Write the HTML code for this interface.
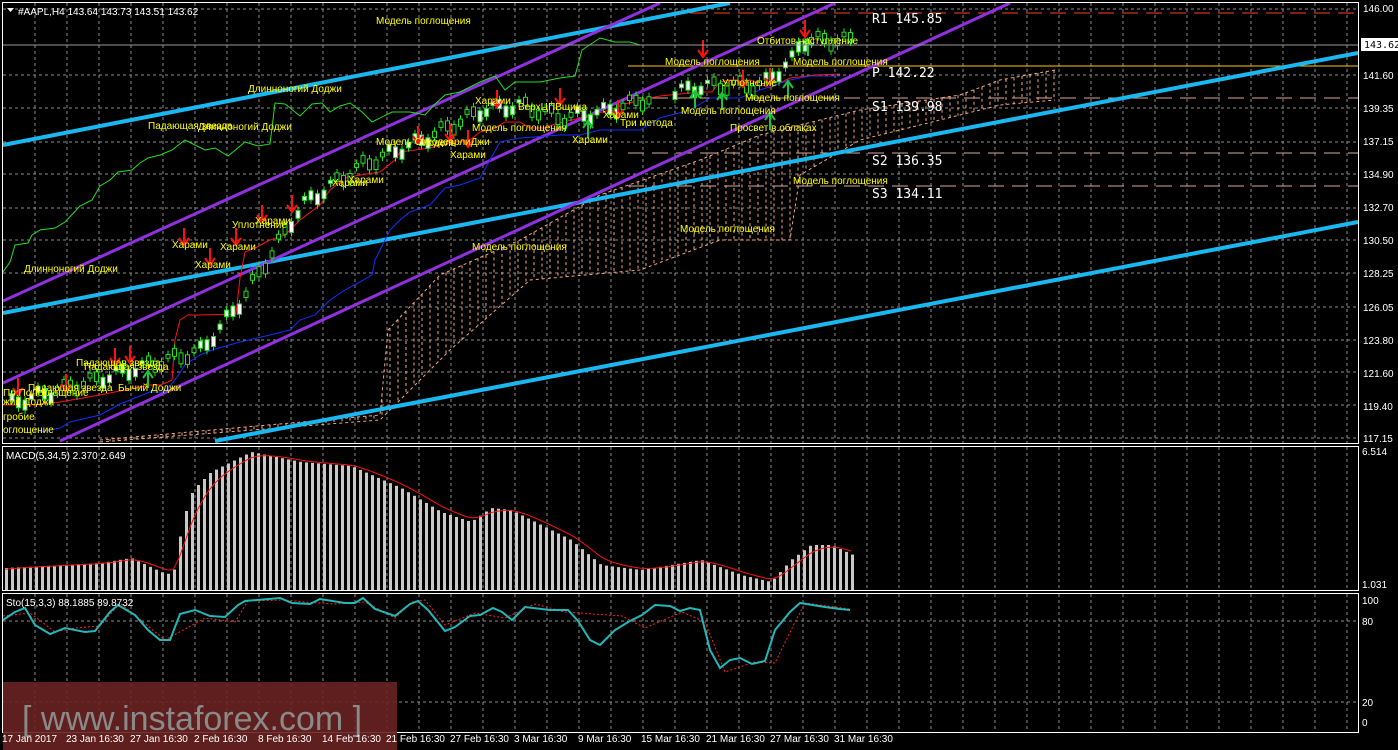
<!DOCTYPE html>
<html><head><meta charset="utf-8"><style>
html,body{margin:0;padding:0;background:#000;width:1398px;height:750px;overflow:hidden}
svg{display:block}
text{font-family:"Liberation Sans","DejaVu Sans",sans-serif}
.y{fill:#ffff00;font-size:10px}
.ax{fill:#fff;font-size:10px;font-family:"DejaVu Sans Mono","Liberation Mono",monospace}
.pv{fill:#fff;font-size:13px;font-family:"DejaVu Sans Mono","Liberation Mono",monospace}
</style></head><body>
<svg id="s" width="1398" height="750" viewBox="0 0 1398 750" xmlns="http://www.w3.org/2000/svg">
<rect width="1398" height="750" fill="#000"/>
<g id="grid" stroke="#8a8a8a" stroke-width="1" stroke-dasharray="3,3"></g>
<defs><clipPath id="cm"><rect x="3" y="3" width="1355" height="440"/></clipPath></defs>
<g clip-path="url(#cm)">
<g id="cloud" stroke="#f0a878" stroke-width="1" stroke-dasharray="3,3" fill="none"></g>
<line x1="690" y1="13" x2="1358" y2="13" stroke="#ff4020" stroke-dasharray="16,8"/>
<line x1="628" y1="66" x2="1358" y2="66" stroke="#ffc800"/>
<line x1="628" y1="98" x2="1358" y2="98" stroke="#d8a898" stroke-dasharray="16,8"/>
<line x1="628" y1="153" x2="1358" y2="153" stroke="#d8a898" stroke-dasharray="16,8"/>
<line x1="628" y1="186" x2="1358" y2="186" stroke="#d8a898" stroke-dasharray="16,8"/>
<line x1="3" y1="145" x2="730" y2="3" stroke="#1ab8f0" stroke-width="4"/>
<line x1="3" y1="313" x2="1358" y2="53" stroke="#1ab8f0" stroke-width="4"/>
<line x1="215" y1="441" x2="1358" y2="222" stroke="#1ab8f0" stroke-width="4"/>
<line x1="3" y1="301" x2="660" y2="3" stroke="#9030e0" stroke-width="3"/>
<line x1="3" y1="383" x2="835" y2="3" stroke="#9030e0" stroke-width="3"/>
<line x1="60" y1="441" x2="1010" y2="3" stroke="#9030e0" stroke-width="3"/>
<polyline fill="none" stroke="#20e020" stroke-width="1" points="3,272 10,262 15,245 28,243 32,235 40,230 55,228 65,222 80,206 92,200 100,186 110,180 118,172 132,170 140,163 148,158 160,155 172,150 185,140 205,150 215,148 228,156 245,142 258,146 270,144 275,103 285,104 300,116 312,104 322,103 330,112 340,106 350,103 362,112 372,122 392,112 410,112 425,115 433,106 445,95 460,92 480,82 495,76 505,90 515,82 540,82 560,78 575,76 582,50 600,38 615,42 630,42 640,45"/>
<polyline fill="none" stroke="#ff1010" stroke-width="1" points="3,405 30,405 60,402 100,395 150,385 160,385 168,382 172,380 175,340 180,320 188,315 200,315 236,314 240,278 245,252 255,248 270,240 285,235 300,220 320,205 330,190 345,178 360,175 380,172 395,160 400,152 415,150 430,148 440,145 455,142 470,140 480,132 495,128 505,122 520,122 530,128 545,128 555,124 580,118 595,114 610,110 625,104 640,100 660,96 680,94 700,92 712,92 720,82 730,80 750,80 770,88 790,78 815,75 840,74"/>
<polyline fill="none" stroke="#1030ff" stroke-width="1" points="40,432 60,428 70,422 100,415 120,404 150,392 165,392 175,380 185,365 200,355 212,350 240,342 270,335 290,330 300,320 315,315 330,300 345,290 360,282 372,275 375,260 380,250 390,230 400,220 410,212 430,205 445,188 460,185 480,178 490,160 500,142 520,138 560,135 580,135 600,130 640,130 660,118 690,110 700,104 710,98 740,98 760,90 790,80 810,76 840,76"/>
<g id="candles"></g>
<g id="arrows"></g>
<text class="y" x="376" y="24">Модель поглощения</text>
<text class="y" x="248" y="92">Длинноногий Доджи</text>
<text class="y" x="148" y="129">Падающая звезда</text>
<text class="y" x="198" y="130">Длинноногий Доджи</text>
<text class="y" x="376" y="145">Модель ОтходеврлиДжи</text>
<text class="y" x="420" y="146">Модель</text>
<text class="y" x="332" y="186">Харами</text>
<text class="y" x="348" y="183">Харами</text>
<text class="y" x="450" y="158">Харами</text>
<text class="y" x="172" y="248">Харами</text>
<text class="y" x="195" y="268">Харами</text>
<text class="y" x="220" y="250">Харами</text>
<text class="y" x="232" y="228">Уплотнение</text>
<text class="y" x="255" y="224">Харами</text>
<text class="y" x="24" y="272">Длинноногий Доджи</text>
<text class="y" x="475" y="104">Харами</text>
<text class="y" x="518" y="110">ВерхЦПВщица</text>
<text class="y" x="472" y="131">Модель поглощения</text>
<text class="y" x="572" y="143">Харами</text>
<text class="y" x="603" y="118">Харами</text>
<text class="y" x="620" y="126">Три метода</text>
<text class="y" x="665" y="65">Модель поглощения</text>
<text class="y" x="722" y="86">Уплотнение</text>
<text class="y" x="745" y="101">Модель поглощения</text>
<text class="y" x="681" y="114">Модель поглощения</text>
<text class="y" x="730" y="131">Просвет в облаках</text>
<text class="y" x="757" y="44">Отбитов наступление</text>
<text class="y" x="793" y="65">Модель поглощения</text>
<text class="y" x="793" y="184">Модель поглощения</text>
<text class="y" x="680" y="232">Модель поглощения</text>
<text class="y" x="472" y="250">Модель поглощения</text>
<text class="y" x="76" y="366">Падающая звезда</text>
<text class="y" x="84" y="370">Падающая звезда</text>
<text class="y" x="118" y="391">Бычий Доджи</text>
<text class="y" x="28" y="391">Падающая звезда</text>
<text class="y" x="3" y="396">Пр:ПоЛоглещение</text>
<text class="y" x="3" y="405">жий Доджи</text>
<text class="y" x="3" y="420">гробие</text>
<text class="y" x="3" y="433">оглощение</text>
<text class="pv" x="872" y="23">R1 145.85</text>
<text class="pv" x="872" y="77">P 142.22</text>
<text class="pv" x="872" y="111">S1 139.98</text>
<text class="pv" x="872" y="165">S2 136.35</text>
<text class="pv" x="872" y="198">S3 134.11</text>
</g>
<line x1="3" y1="45" x2="1358" y2="45" stroke="#9a9a9a"/>
<g fill="none" stroke="#fff" stroke-width="1">
<rect x="2.5" y="2.5" width="1356" height="441"/>
<rect x="2.5" y="446.5" width="1356" height="144"/>
<rect x="2.5" y="593.5" width="1356" height="139"/>
</g>
<g id="macd" fill="#c8c8c8"></g>
<polyline id="sig" fill="none" stroke="#ff1010" stroke-width="1"/>
<polyline fill="none" stroke="#ff2020" stroke-width="1" stroke-dasharray="2,2" points="3,616 30,613 55,632 75,628 100,626 120,603 165,640 205,618 235,622 248,601 285,600 305,602 335,604 365,602 395,618 412,602 425,600 445,625 475,613 505,618 535,604 565,612 622,616 645,628 682,612 705,622 725,672 755,662 775,663 795,622 805,603 850,609"/>
<polyline fill="none" stroke="#20b8b8" stroke-width="2" points="3,620 15,612 25,608 35,625 50,634 65,628 85,632 95,631 110,612 118,605 135,615 148,630 160,640 170,640 180,614 195,610 210,616 225,617 238,605 245,601 280,598 292,603 310,604 320,599 345,603 355,603 363,598 375,609 395,616 410,604 418,601 428,610 445,631 455,627 470,616 480,615 493,608 502,612 512,620 525,607 550,610 568,610 578,621 590,640 600,645 615,630 630,621 642,615 655,605 670,606 680,611 690,608 700,610 710,650 720,668 730,660 740,658 752,664 765,661 775,630 790,612 800,603 825,607 840,609 850,610"/>
<g class="ax">
<text x="1363" y="12">146.00</text>
<text x="1363" y="79">141.60</text>
<text x="1363" y="112">139.35</text>
<text x="1363" y="145">137.15</text>
<text x="1363" y="178">134.90</text>
<text x="1363" y="211">132.70</text>
<text x="1363" y="244">130.50</text>
<text x="1363" y="277">128.25</text>
<text x="1363" y="311">126.05</text>
<text x="1363" y="344">123.80</text>
<text x="1363" y="377">121.60</text>
<text x="1363" y="410">119.40</text>
<text x="1363" y="442">117.15</text>
<text x="1362" y="455">6.514</text>
<text x="1362" y="588">1.031</text>
<text x="1362" y="604">100</text>
<text x="1362" y="625">80</text>
<text x="1362" y="706">20</text>
<text x="1362" y="726">0</text>
</g>
<rect x="1361" y="38" width="37" height="13" fill="#fff"/>
<text x="1364" y="48" style="fill:#000;font-size:10px;font-family:'DejaVu Sans Mono',monospace">143.62</text>
<path d="M7 8 L14 8 L10.5 12 Z" fill="#fff"/>
<text x="18" y="15" style="fill:#fff;font-size:10px">#AAPL,H4  143.64 143.73 143.51 143.62</text>
<text x="6" y="459" style="fill:#fff;font-size:10px">MACD(5,34,5) 2.370 2.649</text>
<text x="6" y="606" style="fill:#fff;font-size:10px">Sto(15,3,3) 88.1885 89.8732</text>
<rect x="3" y="682" width="394" height="68" fill="#6a2222" opacity="0.9"/>
<text x="22" y="730" style="fill:#8a8a8a;font-size:34px">[ www.instaforex.com ]</text>
<g style="fill:#fff;font-size:10px">
<text x="2" y="742">17 Jan 2017</text><text x="66" y="742">23 Jan 16:30</text><text x="130" y="742">27 Jan 16:30</text><text x="194" y="742">2 Feb 16:30</text><text x="258" y="742">8 Feb 16:30</text><text x="322" y="742">14 Feb 16:30</text><text x="386" y="742">21 Feb 16:30</text><text x="450" y="742">27 Feb 16:30</text><text x="514" y="742">3 Mar 16:30</text><text x="578" y="742">9 Mar 16:30</text><text x="641" y="742">15 Mar 16:30</text><text x="706" y="742">21 Mar 16:30</text><text x="770" y="742">27 Mar 16:30</text><text x="834" y="742">31 Mar 16:30</text>
</g>
</svg>
<script>
(function(){
var NS="http://www.w3.org/2000/svg";
function el(p,t,a){var e=document.createElementNS(NS,t);for(var k in a)e.setAttribute(k,a[k]);p.appendChild(e);return e;}
var g=document.getElementById('grid');
for(var x=35;x<1358;x+=32){el(g,'line',{x1:x,y1:3,x2:x,y2:443});el(g,'line',{x1:x,y1:447,x2:x,y2:590});el(g,'line',{x1:x,y1:594,x2:x,y2:732});}
[9,75,108,142,174,208,240,273,307,340,372,405,438].forEach(function(y){el(g,'line',{x1:3,y1:y,x2:1358,y2:y});});
[621,702].forEach(function(y){el(g,'line',{x1:3,y1:y,x2:1358,y2:y});});
function interp(pts,x){for(var i=0;i<pts.length-1;i++){if(x>=pts[i][0]&&x<=pts[i+1][0]){var t=(x-pts[i][0])/(pts[i+1][0]-pts[i][0]);return pts[i][1]+t*(pts[i+1][1]-pts[i][1]);}}return pts[pts.length-1][1];}
var ctop=[[100,440],[380,415],[388,330],[440,275],[520,240],[600,195],[700,160],[760,135],[860,110],[960,95],[1000,80],[1055,70]];
var cbot=[[100,442],[380,420],[450,350],[530,280],[640,270],[720,240],[790,240],[800,175],[860,140],[920,125],[1000,105],[1055,100]];
var c=document.getElementById('cloud');
for(var x=110;x<=1055;x+=8){var a=interp(ctop,x),b=interp(cbot,x);el(c,'line',{x1:x,y1:a,x2:x,y2:b});}
el(c,'polyline',{points:ctop.map(function(p){return p.join(',')}).join(' ')});
el(c,'polyline',{points:cbot.map(function(p){return p.join(',')}).join(' ')});
var cd=document.getElementById('candles');
var cp=[[3,405],[20,400],[200,350],[240,300],[300,205],[360,165],[420,140],[480,110],[520,105],[560,118],[600,112],[640,100],[700,86],[760,85],[790,60],[800,40],[850,40]];
for(var x=10;x<850;x+=6.5){if(x>650&&x<670)continue;var y=interp(cp,x)+(Math.sin(x*1.7)*6);var h=3+Math.abs(Math.cos(x*2.3))*8;var up=Math.sin(x*0.9)>0;
el(cd,'line',{x1:x+2,y1:y-h/2-4,x2:x+2,y2:y+h/2+4,stroke:'#20e020'});
el(cd,'rect',{x:x,y:y-h/2,width:4,height:h,fill:up?'#fff':'#000',stroke:'#20e020','stroke-width':1});}
var ar=document.getElementById('arrows');
[[18,388],[66,384],[115,358],[130,356],[184,238],[210,258],[236,238],[262,215],[292,205],[418,136],[450,134],[468,140],[497,100],[560,98],[618,110],[703,50],[743,80],[770,78],[805,30]].forEach(function(p){
el(ar,'path',{d:'M'+p[0]+' '+(p[1]-10)+' V'+(p[1]+6)+' M'+(p[0]-5)+' '+(p[1])+' L'+p[0]+' '+(p[1]+7)+' L'+(p[0]+5)+' '+p[1],stroke:'#ff1010','stroke-width':2,fill:'none'});});
[[148,378],[588,128],[695,98],[722,100],[770,120],[788,88],[808,46]].forEach(function(p){
el(ar,'path',{d:'M'+p[0]+' '+(p[1]+10)+' V'+(p[1]-6)+' M'+(p[0]-5)+' '+p[1]+' L'+p[0]+' '+(p[1]-7)+' L'+(p[0]+5)+' '+p[1],stroke:'#20c040','stroke-width':2,fill:'none'});});
var mp=[[5,568],[100,563],[130,558],[160,572],[172,575],[182,520],[192,490],[210,472],[250,452],[300,462],[350,466],[400,488],[440,512],[470,522],[490,508],[510,510],[540,525],[570,540],[600,565],[640,570],[700,560],[740,575],[770,582],[790,560],[810,545],[830,545],[852,555]];
var m=document.getElementById('macd');var sig=[];var s=570;
for(var x=5;x<=852;x+=6){var y=interp(mp,x);el(m,'rect',{x:x,y:y,width:3,height:590-y});s=s+(y-s)*0.35;sig.push(x+','+s.toFixed(1));}
document.getElementById('sig').setAttribute('points',sig.join(' '));
})();
</script>
</body></html>
